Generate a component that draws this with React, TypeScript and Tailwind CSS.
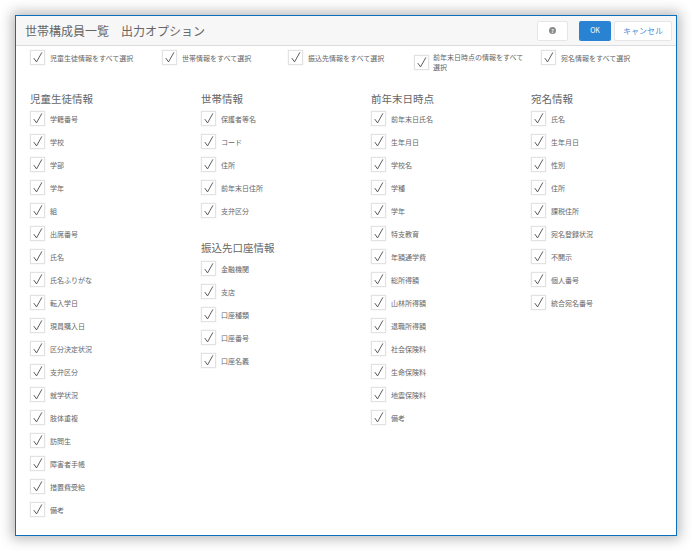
const CheckBox = () => (
  <span className="flex h-[15px] w-[15px] shrink-0 items-center justify-center border border-[#e2e2e2] bg-white shadow-[0_0_1px_#d8d8d8]">
    <svg viewBox="0 0 15 15" className="h-[15px] w-[15px]" fill="none">
      <path d="M3.2 8.2 L6.4 12.6 L12.6 1.6" stroke="#444444" strokeWidth="1" />
    </svg>
  </span>
);

const Check = ({ label }: { label: string }) => (
  <div className="flex h-[23px] items-center gap-[5px]">
    <CheckBox />
    <span className="text-[7px] leading-[10px] text-[#666]">{label}</span>
  </div>
);

const Section = ({ title, items, roomy }: { title: string; items: string[]; roomy?: boolean }) => (
  <div>
    <h2 className={`${roomy ? "h-[18px]" : "h-[17px]"} text-[10.5px] leading-[17px] font-normal text-[#666]`}>{title}</h2>
    {items.map((t, i) => (
      <Check key={i} label={t} />
    ))}
  </div>
);

const col1 = ["学籍番号", "学校", "学部", "学年", "組", "出席番号", "氏名", "氏名ふりがな", "転入学日", "現員購入日", "区分決定状況", "支弁区分", "就学状況", "肢体重複", "訪問生", "障害者手帳", "措置費受給", "備考"];
const col2a = ["保護者等名", "コード", "住所", "前年末日住所", "支弁区分"];
const col2b = ["金融機関", "支店", "口座種類", "口座番号", "口座名義"];
const col3 = ["前年末日氏名", "生年月日", "学校名", "学種", "学年", "特支教育", "年額通学費", "総所得額", "山林所得額", "退職所得額", "社会保険料", "生命保険料", "地震保険料", "備考"];
const col4 = ["氏名", "生年月日", "性別", "住所", "課税住所", "宛名登録状況", "不開示", "個人番号", "統合宛名番号"];

export default function App() {
  return (
    <div
      className="h-[551px] w-[692px] overflow-hidden bg-white p-[15px]"
      style={{ fontFamily: '"Noto Sans CJK JP", "Noto Sans", sans-serif' }}
    >
      <div className="h-[521px] w-[662px] border border-[#0b6fbd] bg-white shadow-[0_0_12px_3px_rgba(0,0,0,0.28)]">
        <header className="flex h-[30px] items-center border-b border-[#dcdcdc] bg-[#f7f7f7] pr-[4px] pl-[9px]">
          <h1 className="flex-1 text-[12px] leading-none font-normal whitespace-pre text-[#666]">世帯構成員一覧　出力オプション</h1>
          <button className="mr-[11px] flex h-[20px] w-[31px] items-center justify-center rounded-[2px] border border-[#e6e6e6] bg-white">
            <span className="flex h-[7px] w-[7px] items-center justify-center rounded-full bg-[#8a8a8a] text-[5px] leading-none font-bold text-white">?</span>
          </button>
          <button className="mr-[3px] h-[20px] w-[32px] rounded-[2px] bg-[#2a83d2] text-[7px] text-white">OK</button>
          <button className="h-[20px] w-[58px] rounded-[2px] border border-[#e6e6e6] bg-white text-[8px] text-[#4a90d9]">キャンセル</button>
        </header>

        <div className="flex pl-[14px]">
          <div className="w-[132px]"><Check label="児童生徒情報をすべて選択" /></div>
          <div className="w-[126px]"><Check label="世帯情報をすべて選択" /></div>
          <div className="w-[126px]"><Check label="振込先情報をすべて選択" /></div>
          <div className="flex w-[127px] items-start gap-[4px] pt-[9px]">
            <CheckBox />
            <span className="-mt-[3px] w-[92px] text-[7px] leading-[10px] text-[#666]">前年末日時点の情報をすべて選択</span>
          </div>
          <div><Check label="宛名情報をすべて選択" /></div>
        </div>

        <div className="flex pt-[18px] pl-[14px]">
          <div className="w-[171px]"><Section title="児童生徒情報" items={col1} /></div>
          <div className="flex w-[170px] flex-col gap-[17px]">
            <Section title="世帯情報" items={col2a} />
            <Section title="振込先口座情報" items={col2b} roomy />
          </div>
          <div className="w-[160px]"><Section title="前年末日時点" items={col3} /></div>
          <div><Section title="宛名情報" items={col4} /></div>
        </div>
      </div>
    </div>
  );
}
